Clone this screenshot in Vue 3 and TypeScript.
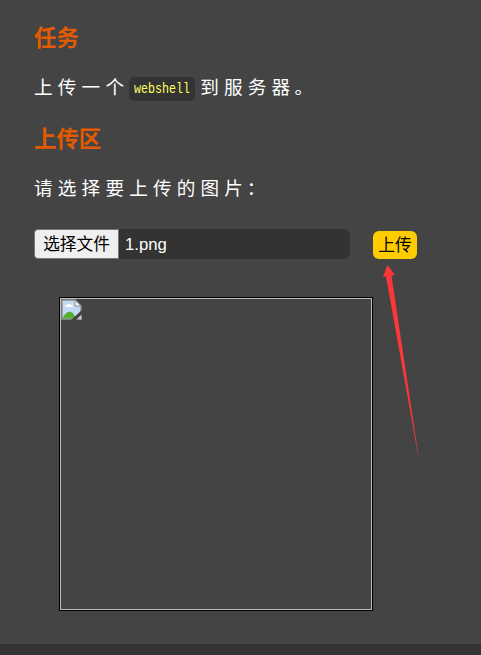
<script setup lang="ts">
import { ref } from 'vue'

const fileName = ref('1.png')
</script>

<template>
  <main class="page">
    <section class="panel">
      <h3>任务</h3>
      <p>上传一个<code><span class="mono">webshell</span></code>到服务器<span class="stop">。</span></p>
      <h3>上传区</h3>
      <p>请选择要上传的图片<span class="colon">：</span></p>
      <form class="upload" @submit.prevent>
        <div class="file">
          <button type="button" class="choose">选择文件</button>
          <span class="name">{{ fileName }}</span>
        </div>
        <button type="submit" class="submit">上传</button>
      </form>
      <div class="preview">
        <svg class="broken" width="22" height="22" viewBox="0 0 22 22">
          <path d="M1 1H14L20 7V20H1Z" fill="#c3d9f6" stroke="#909090" stroke-width="1.5" />
          <path d="M2 19.5V18Q7 10 12 14L15 19.5Z" fill="#55ae32" />
          <path d="M4 8Q4 6 6 6Q8 3 10 6Q12 6 12 8Z" fill="#fff" />
          <path d="M14 1V7H20Z" fill="#f4f4f4" stroke="#909090" />
          <path d="M9 22L22 10V14L14 22Z" fill="#444" />
          <path d="M16 20.5L20.5 16V20.5Z" fill="#c3d9f6" stroke="#909090" />
        </svg>
      </div>
    </section>
    <svg class="arrow" width="40" height="202" viewBox="0 0 40 202">
      <path d="M5.5 0L13 10L9.5 10.5L37.8 200L4 11.5L1 12Z" fill="#fc3737" />
    </svg>
  </main>
</template>

<style>
body {
  background: #333;
}
</style>

<style scoped>
.page {
  position: relative;
  height: 655px;
  overflow: hidden;
  font-family: 'Liberation Sans', 'Noto Sans CJK SC', sans-serif;
}
.panel {
  box-sizing: border-box;
  height: 644px;
  padding: 23px 34px 0;
  background: #444;
}
h3 {
  margin: 0;
  height: 32px;
  line-height: 32px;
  font-size: 22.4px;
  color: #e35b00;
}
p {
  display: flex;
  align-items: center;
  height: 22px;
  padding-bottom: 2px;
  margin: 22px 0 23px;
  font-size: 18.6px;
  line-height: 22px;
  letter-spacing: 5.2px;
  color: #fff;
  white-space: nowrap;
}
code {
  box-sizing: border-box;
  height: 24px;
  width: 66px;
  margin: 2px 5px 0 0;
  padding: 0 5px;
  border-radius: 5px;
  background: #333;
  color: #ffff66;
  font: 14px/25px 'Liberation Mono', monospace;
  letter-spacing: 0;
}
.mono {
  display: inline-block;
  transform: scaleX(0.833);
  transform-origin: left;
}
.stop {
  margin-left: -1px;
}
.colon {
  margin-left: -1.5px;
}
.upload {
  display: flex;
  align-items: center;
  gap: 23px;
  margin-top: 27px;
}
.file {
  display: flex;
  align-items: center;
  width: 316px;
  height: 30px;
  border-radius: 6px;
  background: #333;
  color: #fff;
}
button {
  box-sizing: border-box;
  padding: 2px 0 0;
  font: 16.7px/24px 'Liberation Sans', 'Noto Sans CJK SC', sans-serif;
  color: #000;
  white-space: nowrap;
}
.choose {
  width: 85px;
  height: 30px;
  border: 1px solid #777;
  border-radius: 4px 0 0 4px;
  background: #efefef;
}
.name {
  margin: 2px 0 0 6px;
  font-size: 16.7px;
}
.submit {
  width: 44px;
  height: 28px;
  margin-top: 2px;
  border: 0;
  border-radius: 6px;
  background: #fc0;
}
.preview {
  box-sizing: border-box;
  width: 314px;
  height: 314px;
  margin: 38px 0 0 25px;
  border: 1px solid #000;
  box-shadow: inset 0 0 0 1px #c0c0c0;
}
.broken {
  display: block;
  margin: 1px;
}
.arrow {
  position: absolute;
  left: 382px;
  top: 265px;
}
</style>
